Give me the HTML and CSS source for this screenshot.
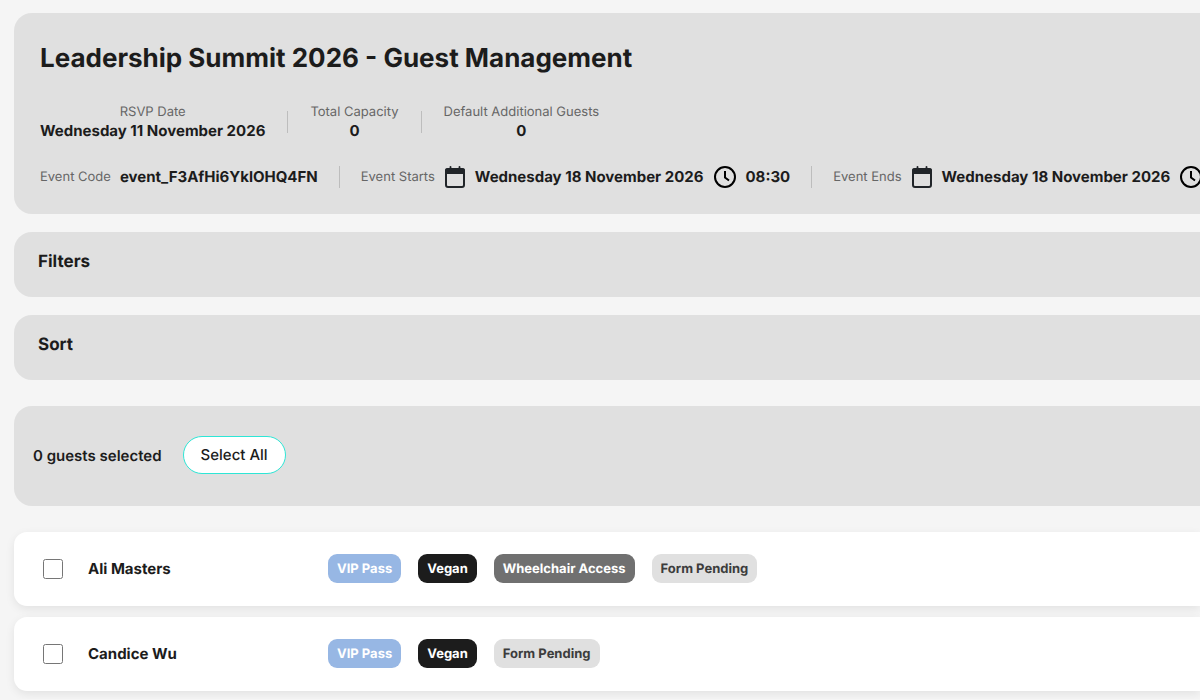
FILE: index.html
```
<!DOCTYPE html>
<html lang="en">
<head>
    <meta charset="UTF-8">
    <title>Guest Management</title>
    <link rel="stylesheet" href="styles.css">
</head>
<body>
    <!-- Shared icons -->
    <svg class="icon-defs" aria-hidden="true">
        <symbol id="icon-calendar" viewBox="0 0 22 24">
            <rect x="2" y="4" width="18" height="18" rx="2" fill="none" stroke="#212529" stroke-width="2"/>
            <path d="M1 9V5.200a2 2 0 0 1 2-2h16a2 2 0 0 1 2 2V9z" fill="#212529"/>
            <path d="M6.500 1.800v3M15.500 1.800v3" stroke="#212529" stroke-width="1.800" stroke-linecap="round"/>
        </symbol>
        <symbol id="icon-clock" viewBox="0 0 24 24">
            <circle cx="12" cy="12" r="10" fill="none" stroke="#000" stroke-width="2"/>
            <path d="M12 6v6.500l4 3" fill="none" stroke="#000" stroke-width="2"/>
        </symbol>
    </svg>

    <main class="container">
        <header class="panel event-header">
            <h1>Leadership Summit 2026 - Guest Management</h1>

            <div class="event-stats">
                <div class="stat">
                    <span class="label">RSVP Date</span>
                    <span class="value">Wednesday 11 November 2026</span>
                </div>
                <div class="divider"></div>
                <div class="stat">
                    <span class="label">Total Capacity</span>
                    <span class="value">0</span>
                </div>
                <div class="divider"></div>
                <div class="stat">
                    <span class="label">Default Additional Guests</span>
                    <span class="value">0</span>
                </div>
            </div>

            <div class="event-details">
                <div class="detail">
                    <span class="label">Event Code</span>
                    <span class="value">event_F3AfHi6YklOHQ4FN</span>
                </div>
                <div class="divider"></div>
                <div class="detail">
                    <span class="label">Event Starts</span>
                    <svg class="icon-calendar"><use href="#icon-calendar"/></svg>
                    <span class="value">Wednesday 18 November 2026</span>
                    <svg class="icon-clock"><use href="#icon-clock"/></svg>
                    <span class="value">08:30</span>
                </div>
                <div class="divider"></div>
                <div class="detail">
                    <span class="label">Event Ends</span>
                    <svg class="icon-calendar"><use href="#icon-calendar"/></svg>
                    <span class="value">Wednesday 18 November 2026</span>
                    <svg class="icon-clock"><use href="#icon-clock"/></svg>
                </div>
            </div>
        </header>

        <button type="button" class="panel toggle-panel">Filters</button>
        <button type="button" class="panel toggle-panel">Sort</button>

        <section class="panel selection-bar">
            <span class="selected-count">0 guests selected</span>
            <button type="button" class="select-all">Select All</button>
        </section>

        <ul class="guest-list">
            <li class="guest-card">
                <input type="checkbox" id="guest1">
                <label class="guest-name" for="guest1">Ali Masters</label>
                <div class="tags">
                    <span class="tag tag-vip">VIP Pass</span>
                    <span class="tag tag-diet">Vegan</span>
                    <span class="tag tag-access">Wheelchair Access</span>
                    <span class="tag tag-pending">Form Pending</span>
                </div>
            </li>
            <li class="guest-card">
                <input type="checkbox" id="guest2">
                <label class="guest-name" for="guest2">Candice Wu</label>
                <div class="tags">
                    <span class="tag tag-vip">VIP Pass</span>
                    <span class="tag tag-diet">Vegan</span>
                    <span class="tag tag-pending">Form Pending</span>
                </div>
            </li>
        </ul>
    </main>
</body>
</html>
```
FILE: styles.css
```
* {
    box-sizing: border-box;
}
body {
    margin: 0;
    background-color: #f5f5f5;
    color: #1c1c1c;
    font-family: Inter, sans-serif;
    font-size: 15px;
    text-rendering: geometricPrecision;
    overflow-x: hidden;
}
.icon-defs {
    display: none;
}
.container {
    display: flex;
    flex-direction: column;
    padding: 13px 0 8px 14px;
}
.panel {
    background-color: #e0e0e0;
    border-radius: 18px 0 0 18px;
    margin-bottom: 18px;
}

/* Event header */
.event-header {
    padding: 29px 0 25px 26px;
    overflow: hidden;
}
h1 {
    margin: 0 0 27px;
    font-size: 26px;
    line-height: 34px;
    font-weight: 700;
}
.event-stats,
.event-details {
    display: flex;
    align-items: center;
    white-space: nowrap;
}
.event-stats {
    gap: 22px;
    margin-bottom: 24px;
}
.event-details {
    gap: 21px;
}
.stat {
    display: flex;
    flex-direction: column;
    align-items: center;
}
.detail {
    display: flex;
    align-items: center;
    flex-shrink: 0;
    gap: 9px;
}
.label {
    color: #666;
    font-size: 13px;
    line-height: 18px;
}
.value {
    font-size: 15px;
    line-height: 20px;
    font-weight: 700;
}
.divider {
    flex-shrink: 0;
    width: 1px;
    height: 22px;
    background-color: #bdbdbd;
}
.icon-calendar {
    width: 22px;
    height: 24px;
}
.icon-clock {
    width: 24px;
    height: 24px;
}

/* Filters / Sort */
.toggle-panel {
    border: none;
    padding: 19px 24px 24px;
    color: #1c1c1c;
    font-family: inherit;
    font-size: 17px;
    line-height: 22px;
    font-weight: 700;
    text-align: left;
    text-rendering: inherit;
    cursor: pointer;
}

/* Selection bar */
.selection-bar {
    display: flex;
    align-items: center;
    gap: 21px;
    margin: 8px 0 26px;
    padding: 30px 19px 32px;
}
.selected-count {
    font-weight: 600;
}
.select-all {
    padding: 8px 17px;
    border: 1px solid #2ee6d6;
    border-radius: 20px;
    background-color: white;
    color: #1c1c1c;
    font-family: inherit;
    font-size: 15px;
    line-height: 20px;
    font-weight: 500;
    text-rendering: inherit;
    cursor: pointer;
}

/* Guests */
.guest-list {
    display: flex;
    flex-direction: column;
    gap: 11px;
    margin: 0;
    padding: 0;
    list-style: none;
}
.guest-card {
    display: flex;
    align-items: center;
    padding: 22px 0 23px 29px;
    background-color: white;
    border-radius: 13px 0 0 13px;
    box-shadow: 0 3px 10px rgba(0,0,0,0.08);
}
.guest-card input {
    width: 20px;
    height: 20px;
    margin: 0 25px 0 0;
}
.guest-name {
    width: 240px;
    font-weight: 700;
}
.tags {
    display: flex;
    gap: 17px;
}
.tag {
    padding: 6px 9px 5px;
    border-radius: 9px;
    font-size: 13px;
    line-height: 18px;
    font-weight: 700;
    color: white;
}
.tag-vip {
    background-color: #97b7e4;
}
.tag-diet {
    background-color: #1c1c1c;
}
.tag-access {
    background-color: #707070;
}
.tag-pending {
    background-color: #e0e0e0;
    color: #3c3c3c;
}
```
